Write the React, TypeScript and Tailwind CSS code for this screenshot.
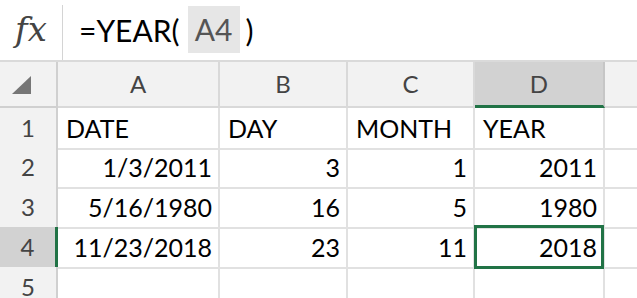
import React from 'react';

// Spreadsheet excerpt: formula bar plus a 5-row grid with D4 selected
const font = { fontFamily: 'Lato, "Open Sans", sans-serif' };

type Cell = { text: string; align: 'left' | 'right' };

const rows: Cell[][] = [
  [
    { text: 'DATE', align: 'left' },
    { text: 'DAY', align: 'left' },
    { text: 'MONTH', align: 'left' },
    { text: 'YEAR', align: 'left' },
  ],
  [
    { text: '1/3/2011', align: 'right' },
    { text: '3', align: 'right' },
    { text: '1', align: 'right' },
    { text: '2011', align: 'right' },
  ],
  [
    { text: '5/16/1980', align: 'right' },
    { text: '16', align: 'right' },
    { text: '5', align: 'right' },
    { text: '1980', align: 'right' },
  ],
  [
    { text: '11/23/2018', align: 'right' },
    { text: '23', align: 'right' },
    { text: '11', align: 'right' },
    { text: '2018', align: 'right' },
  ],
];

const gridCols = 'grid grid-cols-[58px_162px_128px_127px_130px_1fr]';

const FormulaBar: React.FC = () => (
  <div className="flex h-[60px] items-stretch bg-white">
    <div className="flex w-[62px] items-center justify-center pb-[3px]">
      <span
        className="text-[34px] italic leading-none text-[#444]"
        style={{ fontFamily: '"DejaVu Serif", "Liberation Serif", serif' }}
      >
        fx
      </span>
    </div>
    <div className="mt-[5px] w-px bg-[#d4d4d4]" />
    <div className="flex items-center pl-[16px] text-[30px] text-black" style={font}>
      <span>=YEAR(</span>
      <span className="ml-[8px] flex h-[47px] w-[52px] items-center justify-center self-start mt-[6px] bg-[#e6e6e6] text-[#555]">
        A4
      </span>
      <span className="ml-[6px]">)</span>
    </div>
  </div>
);

const ColumnHeaders: React.FC = () => (
  <div className={`${gridCols} h-[48px] border-t-2 border-[#dadada] text-[24px] text-[#444]`} style={font}>
    <div className="flex items-center justify-center border-b-2 border-r-2 border-[#d0d0d0] bg-[#f2f2f2]">
      <svg width="19" height="18" viewBox="0 0 19 18" className="ml-[-14px] mt-[2px]">
        <polygon points="19,0 19,18 0,18" fill="#767676" />
      </svg>
    </div>
    {['A', 'B', 'C'].map((c) => (
      <div
        key={c}
        className="flex items-center justify-center border-b-2 border-r-2 border-[#d9d9d9] bg-[#f2f2f2]"
      >
        {c}
      </div>
    ))}
    <div className="flex items-center justify-center border-b-[3px] border-r-2 border-b-[#217346] border-r-[#c6c6c6] bg-[#d2d2d2]">
      D
    </div>
    <div className="border-b-2 border-[#d9d9d9] bg-[#f2f2f2]" />
  </div>
);

const App: React.FC = () => {
  return (
    <div className="h-[298px] w-[637px] overflow-hidden bg-white">
      <FormulaBar />
      <ColumnHeaders />
      {rows.map((row, ri) => {
        const selectedRow = ri === 3;
        return (
          <div
            key={ri}
            className={`${gridCols} ${ri === 0 ? 'h-[39px]' : 'h-[40px]'} text-[25px]`}
            style={font}
          >
            <div
              className={
                selectedRow
                  ? 'flex items-center justify-center border-b-2 border-r-[3px] border-b-[#d9d9d9] border-r-[#217346] bg-[#d2d2d2] text-[24px] text-[#444]'
                  : 'flex items-center justify-center border-b-2 border-r-2 border-b-[#d9d9d9] border-r-[#d0d0d0] bg-[#f2f2f2] text-[24px] text-[#444]'
              }
            >
              {ri + 1}
            </div>
            {row.map((cell, ci) => (
              <div
                key={ci}
                className={`relative flex items-center border-b-2 border-r-2 border-[#e1e1e1] text-black ${
                  cell.align === 'right' ? 'justify-end pr-[6px]' : 'justify-start pl-[8px]'
                }`}
              >
                <span className="pt-[2px]">{cell.text}</span>
                {selectedRow && ci === 3 && (
                  <div className="absolute -left-[1px] -top-[2px] -right-[1px] -bottom-[2px] border-[3px] border-[#217346]" />
                )}
              </div>
            ))}
            <div className="border-b-2 border-[#e1e1e1]" />
          </div>
        );
      })}
      <div className={`${gridCols} h-[40px] text-[24px]`} style={font}>
        <div className="flex items-center justify-center border-r-2 border-[#d0d0d0] bg-[#f2f2f2] text-[#444]">
          5
        </div>
        <div className="border-r-2 border-[#e1e1e1]" />
        <div className="border-r-2 border-[#e1e1e1]" />
        <div className="border-r-2 border-[#e1e1e1]" />
        <div className="border-r-2 border-[#e1e1e1]" />
        <div />
      </div>
    </div>
  );
};

export default App;
